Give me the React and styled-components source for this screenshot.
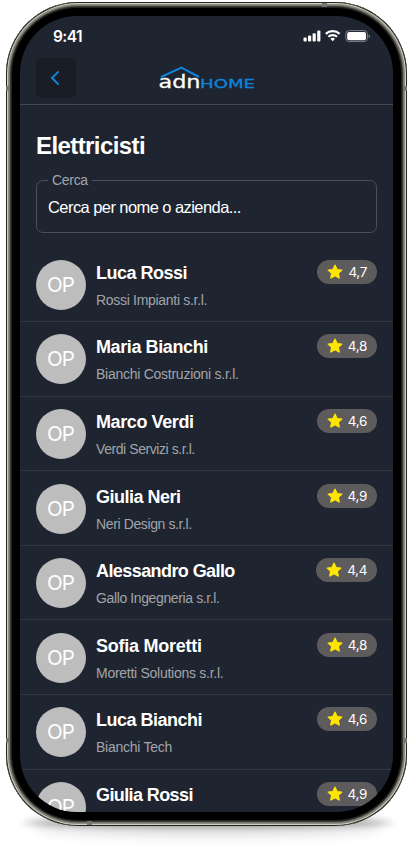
import React from 'react'
import styled, { createGlobalStyle } from 'styled-components'

const GlobalStyle = createGlobalStyle`
  * {
    box-sizing: border-box;
  }

  body {
    margin: 0;
    background: #fff;
    font-family: "Liberation Sans", Arial, sans-serif;
  }
`

const Page = styled.div`
  position: relative;
  width: 416px;
  height: 852px;
  padding: 2px 0 0 6px;
  overflow: hidden;
`

const Shadow = styled.div`
  position: absolute;
  left: ${props => props.$inset}px;
  right: ${props => props.$inset}px;
  top: ${props => props.$top}px;
  height: ${props => props.$height}px;
  border-radius: 50%;
  background: rgba(0, 0, 0, ${props => props.$alpha});
  filter: blur(${props => props.$blur}px);
`

const Phone = styled.div`
  position: relative;
  width: 401px;
  height: 824px;
  padding: 14px;
  border-radius: 72px;
  background: #000;
  box-shadow:
    inset 0 0 0 1px #24241f,
    inset 0 0 0 2px #d0cfc7,
    inset 0 0 0 3px #8d8c80,
    inset 0 0 0 4px #77766c,
    inset 0 0 0 5px #3d3b37,
    inset 0 0 0 6px #24221f;
`

const Seam = styled.div`
  position: absolute;
  width: ${props => (props.$flat ? 5 : 4)}px;
  height: ${props => (props.$flat ? 4 : 5)}px;
  left: ${props => props.$x}px;
  top: ${props => props.$y}px;
  background: #777570;
`

const Screen = styled.div`
  display: flex;
  flex-direction: column;
  width: 373px;
  height: 796px;
  border-radius: 57px;
  overflow: hidden;
  background: #1e2430;
  color: #fff;
`

const StatusBar = styled.div`
  display: flex;
  flex: none;
  align-items: center;
  justify-content: space-between;
  height: 42px;
  padding: 0 22px 0 33px;
`

const Time = styled.span`
  font-family: Inter, "Liberation Sans", sans-serif;
  font-size: 15.5px;
  font-weight: 600;
  line-height: 40px;
  letter-spacing: -0.6px;
`

const StatusIcons = styled.svg`
  width: 68px;
  height: 14px;
  margin-bottom: 2px;
`

const Header = styled.header`
  display: grid;
  grid-template-columns: 40px 1fr 40px;
  flex: none;
  align-items: center;
  height: 47px;
  padding: 0 16px 7px;
  border-bottom: 1px solid #464954;
`

const BackButton = styled.button`
  display: flex;
  align-items: center;
  justify-content: center;
  width: 40px;
  height: 40px;
  padding: 0 2px 0 0;
  border: 0;
  border-radius: 6px;
  background: #191d26;
`

const Logo = styled.svg`
  width: 98px;
  height: 26px;
  justify-self: center;
`

const Title = styled.h1`
  flex: none;
  margin: 27px 16px 0;
  font-size: 24px;
  line-height: 28px;
  letter-spacing: -0.58px;
`

const Field = styled.fieldset`
  flex: none;
  height: 62px;
  margin: 11px 16px 0;
  padding: 0 11px;
  border: 1px solid #4c4f59;
  border-radius: 7px;
`

const Legend = styled.legend`
  padding: 0 4px;
  color: #a2a4aa;
  font-size: 14px;
  line-height: 18px;
  letter-spacing: -0.3px;
`

const Placeholder = styled.div`
  padding-top: 8px;
  font-size: 16.5px;
  line-height: 20px;
  letter-spacing: -0.57px;
`

const List = styled.ul`
  flex: none;
  margin: 14.5px 0 0;
  padding: 0;
  list-style: none;
`

const Row = styled.li`
  display: flex;
  height: 74.6px;
  padding: 12.3px 16px 0;
  border-bottom: 1px solid #343742;
`

const Avatar = styled.div`
  flex: none;
  width: 50px;
  height: 50px;
  border-radius: 50%;
  background: #bdbdbd;
  font-family: Inter, "Liberation Sans", sans-serif;
  font-size: 20.5px;
  line-height: 50px;
  text-align: center;
  letter-spacing: -0.9px;
  text-indent: -1px;
`

const Details = styled.div`
  flex: 1;
  padding-left: 10px;
  white-space: nowrap;
`

const Name = styled.div`
  font-size: 18px;
  font-weight: 700;
  line-height: 26px;
  letter-spacing: ${props => props.$tracking}px;
`

const Company = styled.div`
  margin-top: 5px;
  color: #a2a4aa;
  font-size: 14px;
  line-height: 18px;
  letter-spacing: ${props => props.$tracking}px;
`

const Rating = styled.div`
  display: flex;
  flex: none;
  align-items: center;
  gap: 5px;
  height: 24px;
  padding: 0 10px;
  border-radius: 12px;
  background: #5e5b5d;
  font-family: Inter, "Liberation Sans", sans-serif;
  font-size: 13.5px;
  letter-spacing: -0.35px;
`

const people = [
  { name: 'Luca Rossi', company: 'Rossi Impianti s.r.l.', rating: '4,7', nameTracking: -0.5, companyTracking: -0.3 },
  { name: 'Maria Bianchi', company: 'Bianchi Costruzioni s.r.l.', rating: '4,8', nameTracking: -0.4, companyTracking: -0.26 },
  { name: 'Marco Verdi', company: 'Verdi Servizi s.r.l.', rating: '4,6', nameTracking: -0.4, companyTracking: -0.43 },
  { name: 'Giulia Neri', company: 'Neri Design s.r.l.', rating: '4,9', nameTracking: -0.5, companyTracking: -0.38 },
  { name: 'Alessandro Gallo', company: 'Gallo Ingegneria s.r.l.', rating: '4,4', nameTracking: -0.58, companyTracking: -0.38 },
  { name: 'Sofia Moretti', company: 'Moretti Solutions s.r.l.', rating: '4,8', nameTracking: -0.25, companyTracking: -0.27 },
  { name: 'Luca Bianchi', company: 'Bianchi Tech', rating: '4,6', nameTracking: -0.5, companyTracking: -0.25 },
  { name: 'Giulia Rossi', rating: '4,9', nameTracking: -0.6 },
]

const Star = () => (
  <svg width="16" height="16" viewBox="0 0 16 16">
    <path
      d="M8 1.2 10 5.6 14.8 6.1 11.2 9.3 12.2 14 8 11.6 3.8 14 4.8 9.3 1.2 6.1 6 5.6Z"
      fill="#ffe500"
      stroke="#ffe500"
      strokeWidth="1.4"
      strokeLinejoin="round"
    />
  </svg>
)

const App = () => (
  <Page>
    <GlobalStyle />
    <Shadow $inset={34} $top={814} $height={20} $blur={7} $alpha={0.18} />
    <Shadow $inset={22} $top={820} $height={6} $blur={3} $alpha={0.42} />
    <Phone>
      <Seam $x={0} $y={84} />
      <Seam $x={397} $y={84} />
      <Seam $flat $x={316} $y={1} />
      <Seam $x={0} $y={736} />
      <Seam $x={397} $y={736} />
      <Seam $flat $x={81} $y={819} />
      <Screen>
        <StatusBar>
          <Time>9:41</Time>
          <StatusIcons viewBox="0 0 68 14" fill="#fff">
            <rect x="0.5" y="8.6" width="3.2" height="4" rx="1" />
            <rect x="5" y="6.6" width="3.2" height="6" rx="1" />
            <rect x="9.6" y="4.2" width="3.2" height="8.4" rx="1" />
            <rect x="14.2" y="1.6" width="3.2" height="11" rx="1" />
            <g fill="none" stroke="#fff" strokeWidth="2.2">
              <path d="M22.8 4.9A10 10 0 0 1 36.6 4.9" />
              <path d="M25.4 7.8A6.2 6.2 0 0 1 34 7.8" />
            </g>
            <path d="M27.4 9.8A3.5 3.5 0 0 1 32 9.8L29.7 12.2Z" />
            <rect x="42.8" y="1.6" width="21.6" height="11" rx="3.4" fill="none" stroke="#7b7e85" />
            <rect x="44.2" y="3" width="18.8" height="8.2" rx="2" />
            <path d="M65.6 5.2A2.2 2.2 0 0 1 65.6 9.2Z" fill="#7b7e85" />
          </StatusIcons>
        </StatusBar>
        <Header>
          <BackButton aria-label="Indietro">
            <svg width="10" height="16" viewBox="0 0 10 16" fill="none">
              <path d="M8.5 1.5 2 8 8.5 14.5" stroke="#0d84dc" strokeWidth="2" />
            </svg>
          </BackButton>
          <Logo viewBox="0 0 98 26">
            <path d="M3 12 23.5 2.7 41 12" fill="none" stroke="#0d84dc" strokeWidth="2" />
            <text x="0.5" y="23.2" fill="#fff" stroke="#fff" strokeWidth="0.3" fontSize="17.5" fontFamily="DejaVu Sans" textLength="42" lengthAdjust="spacingAndGlyphs">
              adn
            </text>
            <text x="42" y="23.2" fill="#0d84dc" stroke="#0d84dc" strokeWidth="0.3" fontSize="13" fontFamily="DejaVu Sans" textLength="55" lengthAdjust="spacingAndGlyphs">
              HOME
            </text>
          </Logo>
        </Header>
        <Title>Elettricisti</Title>
        <Field>
          <Legend>Cerca</Legend>
          <Placeholder>Cerca per nome o azienda...</Placeholder>
        </Field>
        <List>
          {people.map(person => (
            <Row key={person.name}>
              <Avatar>OP</Avatar>
              <Details>
                <Name $tracking={person.nameTracking}>{person.name}</Name>
                {person.company && <Company $tracking={person.companyTracking}>{person.company}</Company>}
              </Details>
              <Rating>
                <Star />
                {person.rating}
              </Rating>
            </Row>
          ))}
        </List>
      </Screen>
    </Phone>
  </Page>
)

export default App
